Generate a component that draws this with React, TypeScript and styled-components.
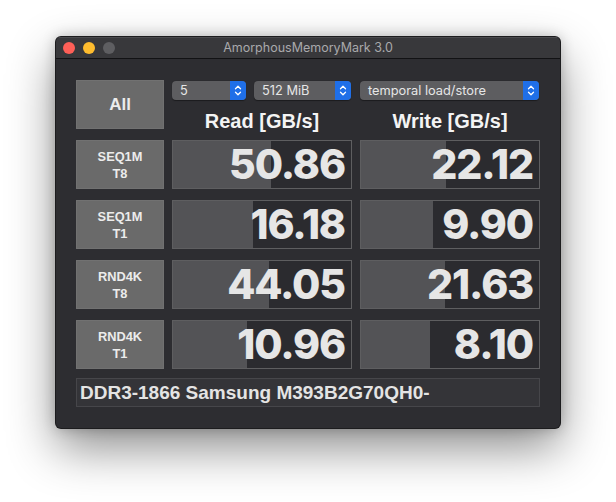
import React from "react";
import styled, { createGlobalStyle } from "styled-components";

const Global = createGlobalStyle`
  html, body { margin: 0; padding: 0; background: #ffffff; }
  body { font-family: Inter, "Liberation Sans", sans-serif; }
`;

const Page = styled.div`
  width: 616px;
  height: 502px;
  padding: 37px 0 0 56px;
  box-sizing: border-box;
`;

const Window = styled.div`
  width: 504px;
  height: 391px;
  border-radius: 5px;
  background: #2d2d31;
  box-shadow: 0 0 0 1px #1c1c1e, 0 20px 48px rgba(0, 0, 0, 0.45), 0 0 14px rgba(0, 0, 0, 0.25);
  overflow: hidden;
  display: flex;
  flex-direction: column;
`;

const TitleBar = styled.div`
  height: 21px;
  flex: none;
  background: #38383b;
  border-bottom: 1px solid #121214;
  box-shadow: inset 0 1px 0 #4a4a4d;
  display: flex;
  align-items: center;
  position: relative;
`;

const Lights = styled.div`
  display: flex;
  gap: 8px;
  padding-left: 7px;
`;

const Light = styled.span<{ $c: string }>`
  width: 12px;
  height: 12px;
  border-radius: 50%;
  background: ${(p) => p.$c};
`;

const Title = styled.div`
  position: absolute;
  left: 0;
  right: 0;
  text-align: center;
  font-size: 12.5px;
  color: #a9a9ab;
  pointer-events: none;
`;

const Content = styled.div`
  padding: 21px 20px 0 20px;
  display: grid;
  grid-template-columns: 88px 180px 180px;
  grid-auto-rows: 50px;
  column-gap: 8px;
  row-gap: 10px;
`;

const LabelBox = styled.div<{ $big?: boolean }>`
  background: #6a6a6a;
  border: 1px solid #717171;
  box-sizing: border-box;
  height: 49px;
  display: flex;
  flex-direction: column;
  align-items: center;
  justify-content: center;
  color: #ececec;
  font-family: "Liberation Sans", Arial, sans-serif;
  font-weight: 700;
  font-size: ${(p) => (p.$big ? "17px" : "12.8px")};
  line-height: ${(p) => (p.$big ? "20px" : "17px")};
  text-align: center;
`;

const HeadCell = styled.div`
  display: flex;
  flex-direction: column;
  align-items: stretch;
`;

const SelectRow = styled.div`
  display: flex;
  gap: 8px;
  margin-top: 1px;
`;

const Select = styled.div<{ $w: number }>`
  width: ${(p) => p.$w}px;
  height: 19px;
  border-radius: 4px;
  background: #5d5d60;
  display: flex;
  align-items: center;
  justify-content: space-between;
  overflow: hidden;
  box-shadow: 0 0.5px 1px rgba(0, 0, 0, 0.4);
`;

const SelectText = styled.span`
  color: #e6e6e6;
  font-size: 12.8px;
  padding-left: 8px;
  white-space: nowrap;
`;

const Stepper = styled.span`
  width: 16px;
  height: 19px;
  background: #1f6fe8;
  display: flex;
  align-items: center;
  justify-content: center;
`;

const HeadText = styled.div`
  text-align: center;
  color: #f4f4f4;
  font-family: "Liberation Sans", Arial, sans-serif;
  font-weight: 700;
  font-size: 20px;
  line-height: 22px;
  margin-top: 10px;
`;

const ValueBox = styled.div`
  position: relative;
  height: 49px;
  box-sizing: border-box;
  border: 1px solid #5e5e60;
  background: #2b2b2f;
  display: flex;
  align-items: center;
  justify-content: flex-end;
  overflow: hidden;
`;

const Fill = styled.div`
  position: absolute;
  left: 0;
  top: 0;
  bottom: 0;
  background: #535356;
`;

const ValueText = styled.span`
  position: relative;
  color: #e6e6e6;
  font-weight: 800;
  font-size: 41px;
  letter-spacing: -1.1px;
  padding-right: 6px;
  line-height: 1;
`;

const InfoBar = styled.div`
  margin: 8px 20px 0 20px;
  height: 29px;
  box-sizing: border-box;
  background: #343438;
  border: 1px solid #46464a;
  display: flex;
  align-items: center;
  padding-left: 3px;
  color: #e4e4e4;
  font-family: "Liberation Sans", Arial, sans-serif;
  font-weight: 700;
  font-size: 19px;
`;

const Chevrons = () => (
  <svg width="10" height="13" viewBox="0 0 10 13" fill="none">
    <path d="M2.5 4.8 L5 2.3 L7.5 4.8" stroke="#ffffff" strokeWidth="1.3" strokeLinecap="round" strokeLinejoin="round" />
    <path d="M2.5 8.2 L5 10.7 L7.5 8.2" stroke="#ffffff" strokeWidth="1.3" strokeLinecap="round" strokeLinejoin="round" />
  </svg>
);

const Sel = ({ w, text }: { w: number; text: string }) => (
  <Select $w={w}>
    <SelectText>{text}</SelectText>
    <Stepper>
      <Chevrons />
    </Stepper>
  </Select>
);

const fillWidth = (v: number) => Math.round(36 + 36.3 * Math.log10(v));

const Value = ({ v }: { v: number }) => (
  <ValueBox>
    <Fill style={{ width: fillWidth(v) }} />
    <ValueText>{v.toFixed(2)}</ValueText>
  </ValueBox>
);

const rows: { l1: string; l2: string; r: number; w: number }[] = [
  { l1: "SEQ1M", l2: "T8", r: 50.86, w: 22.12 },
  { l1: "SEQ1M", l2: "T1", r: 16.18, w: 9.9 },
  { l1: "RND4K", l2: "T8", r: 44.05, w: 21.63 },
  { l1: "RND4K", l2: "T1", r: 10.96, w: 8.1 },
];

export default function App() {
  return (
    <Page>
      <Global />
      <Window>
        <TitleBar>
          <Lights>
            <Light $c="#fe5f57" />
            <Light $c="#febc2e" />
            <Light $c="#5e5e61" />
          </Lights>
          <Title>AmorphousMemoryMark 3.0</Title>
        </TitleBar>
        <Content>
          <LabelBox $big>All</LabelBox>
          <HeadCell>
            <SelectRow>
              <Sel w={74} text="5" />
              <Sel w={97} text="512 MiB" />
            </SelectRow>
            <HeadText>Read [GB/s]</HeadText>
          </HeadCell>
          <HeadCell>
            <SelectRow>
              <Sel w={179} text="temporal load/store" />
            </SelectRow>
            <HeadText>Write [GB/s]</HeadText>
          </HeadCell>
          {rows.map((r, i) => (
            <React.Fragment key={i}>
              <LabelBox>
                <span>{r.l1}</span>
                <span>{r.l2}</span>
              </LabelBox>
              <Value v={r.r} />
              <Value v={r.w} />
            </React.Fragment>
          ))}
        </Content>
        <InfoBar>DDR3-1866 Samsung M393B2G70QH0-</InfoBar>
      </Window>
    </Page>
  );
}
